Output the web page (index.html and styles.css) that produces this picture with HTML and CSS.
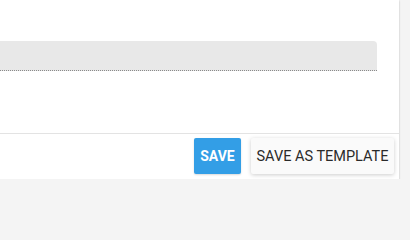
FILE: index.html
```html
<!DOCTYPE html>
<html>
<head>
<meta charset="utf-8">
<link rel="stylesheet" href="styles.css">
</head>
<body>
<div class="card">
  <div class="card-body">
    <div class="field"></div>
  </div>
  <div class="card-footer">
    <button class="btn btn-primary">SAVE</button>
    <button class="btn btn-raised">SAVE AS TEMPLATE</button>
  </div>
</div>
</body>
</html>
```
FILE: styles.css
```css
html, body {
  margin: 0;
  padding: 0;
  background: #f4f4f4;
  font-family: Roboto, "Liberation Sans", sans-serif;
}
.card {
  width: 423px;
  margin-left: -24px;
  background: #fff;
  box-shadow: 0 1px 2px rgba(0,0,0,0.18), 0 0 1px rgba(0,0,0,0.12);
}
.card-body {
  height: 133px;
  padding: 41px 22px 0 16px;
  box-sizing: border-box;
}
.field {
  height: 29px;
  background: #e8e8e8;
  border-radius: 4px 4px 0 0;
  border-bottom: 1px dotted #8a8a8a;
}
.card-footer {
  border-top: 1px solid #e3e3e3;
  height: 46px;
  box-sizing: border-box;
  padding: 4px 5px 6px 0;
  display: flex;
  justify-content: flex-end;
  gap: 10px;
}
.btn {
  height: 36px;
  border: none;
  border-radius: 2px;
  font-family: Roboto, "Liberation Sans", sans-serif;
  font-size: 14px;
  padding: 0;
  cursor: pointer;
}
.btn-primary {
  background: #339ee6;
  color: #fff;
  font-weight: 700;
  width: 47px;
  box-shadow: 0 1px 2px rgba(0,0,0,0.15);
}
.btn-raised {
  background: #fafafa;
  color: #2a2a2a;
  font-weight: 400;
  font-size: 14.5px;
  width: 143px;
  box-shadow: 0 1px 4px rgba(0,0,0,0.2);
}
```
